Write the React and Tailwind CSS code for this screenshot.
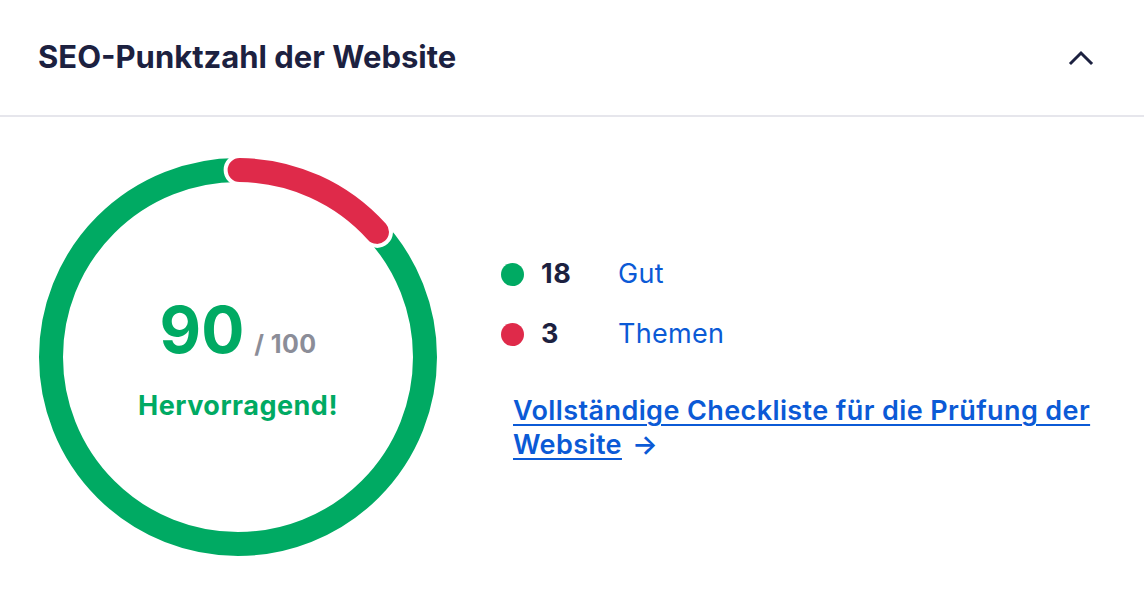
import React from "react";

function Gauge() {
  const r = 187;
  const c = 200;
  const pt = (deg) => {
    const a = (deg * Math.PI) / 180;
    return [c + r * Math.sin(a), c - r * Math.cos(a)];
  };
  const [x1, y1] = pt(0.5);
  const [x2, y2] = pt(48);
  const d = `M ${x1} ${y1} A ${r} ${r} 0 0 1 ${x2} ${y2}`;
  return (
    <svg width="400" height="400" viewBox="0 0 400 400" className="shrink-0">
      <circle cx={c} cy={c} r={r} fill="none" stroke="#00aa63" strokeWidth="24" />
      <path d={d} fill="none" stroke="#ffffff" strokeWidth="32" strokeLinecap="round" />
      <path d={d} fill="none" stroke="#df2a4a" strokeWidth="24" strokeLinecap="round" />
    </svg>
  );
}

export default function App() {
  return (
    <div
      className="w-[1144px] h-[598px] bg-white overflow-hidden"
      style={{ fontFamily: "Inter, 'Noto Sans', sans-serif" }}
    >
      <div className="h-[117px] flex items-center justify-between pl-[38px] pr-[50px] border-b-2 border-[#e6e6ec]">
        <h2 className="text-[31px] font-bold text-[#1c2140] tracking-[0px]">
          SEO-Punktzahl der Website
        </h2>
        <svg width="26" height="16" viewBox="0 0 26 16" fill="none">
          <path d="M3 13 L13 3 L23 13" stroke="#1c2140" strokeWidth="3" strokeLinecap="square" />
        </svg>
      </div>
      <div className="flex items-center pl-[38px] pt-[40px] pr-[30px]">
        <div className="relative w-[400px] h-[400px] shrink-0">
          <Gauge />
          <div className="absolute inset-0 flex flex-col items-center justify-center pt-[10px]">
            <div className="flex items-baseline">
              <span className="text-[64px] leading-none font-bold text-[#00aa63]">90</span>
              <span className="ml-[10px] text-[25px] font-bold text-[#8b8d98] tracking-[0.4px]">/ 100</span>
            </div>
            <div className="mt-[22px] text-[27px] font-bold text-[#00aa63] tracking-[0.5px]">
              Hervorragend!
            </div>
          </div>
        </div>
        <div className="ml-[63px] flex-1 flex flex-col pt-[4px]">
          <div className="flex items-center h-[36px]">
            <span className="w-[23px] h-[23px] rounded-full bg-[#00aa63]" />
            <span className="ml-[17px] w-[77px] text-[27px] font-bold text-[#1c2140] tracking-[0.5px]">18</span>
            <span className="text-[27px] text-[#0b5ad6] tracking-[0.3px]">Gut</span>
          </div>
          <div className="flex items-center h-[36px] mt-[24px]">
            <span className="w-[23px] h-[23px] rounded-full bg-[#df2a4a]" />
            <span className="ml-[17px] w-[77px] text-[27px] font-bold text-[#1c2140] tracking-[0.5px]">3</span>
            <span className="text-[27px] text-[#0b5ad6] tracking-[0.3px]">Themen</span>
          </div>
          <a
            href="#"
            className="mt-[42px] ml-[12px] text-[27px] leading-[34px] font-semibold text-[#0b5ad6] tracking-[0.4px]"
          >
            <span className="underline underline-offset-[4px] decoration-2">
              Vollständige Checkliste für die Prüfung der Website
            </span>
            <span className="ml-[10px]">→</span>
          </a>
        </div>
      </div>
    </div>
  );
}
